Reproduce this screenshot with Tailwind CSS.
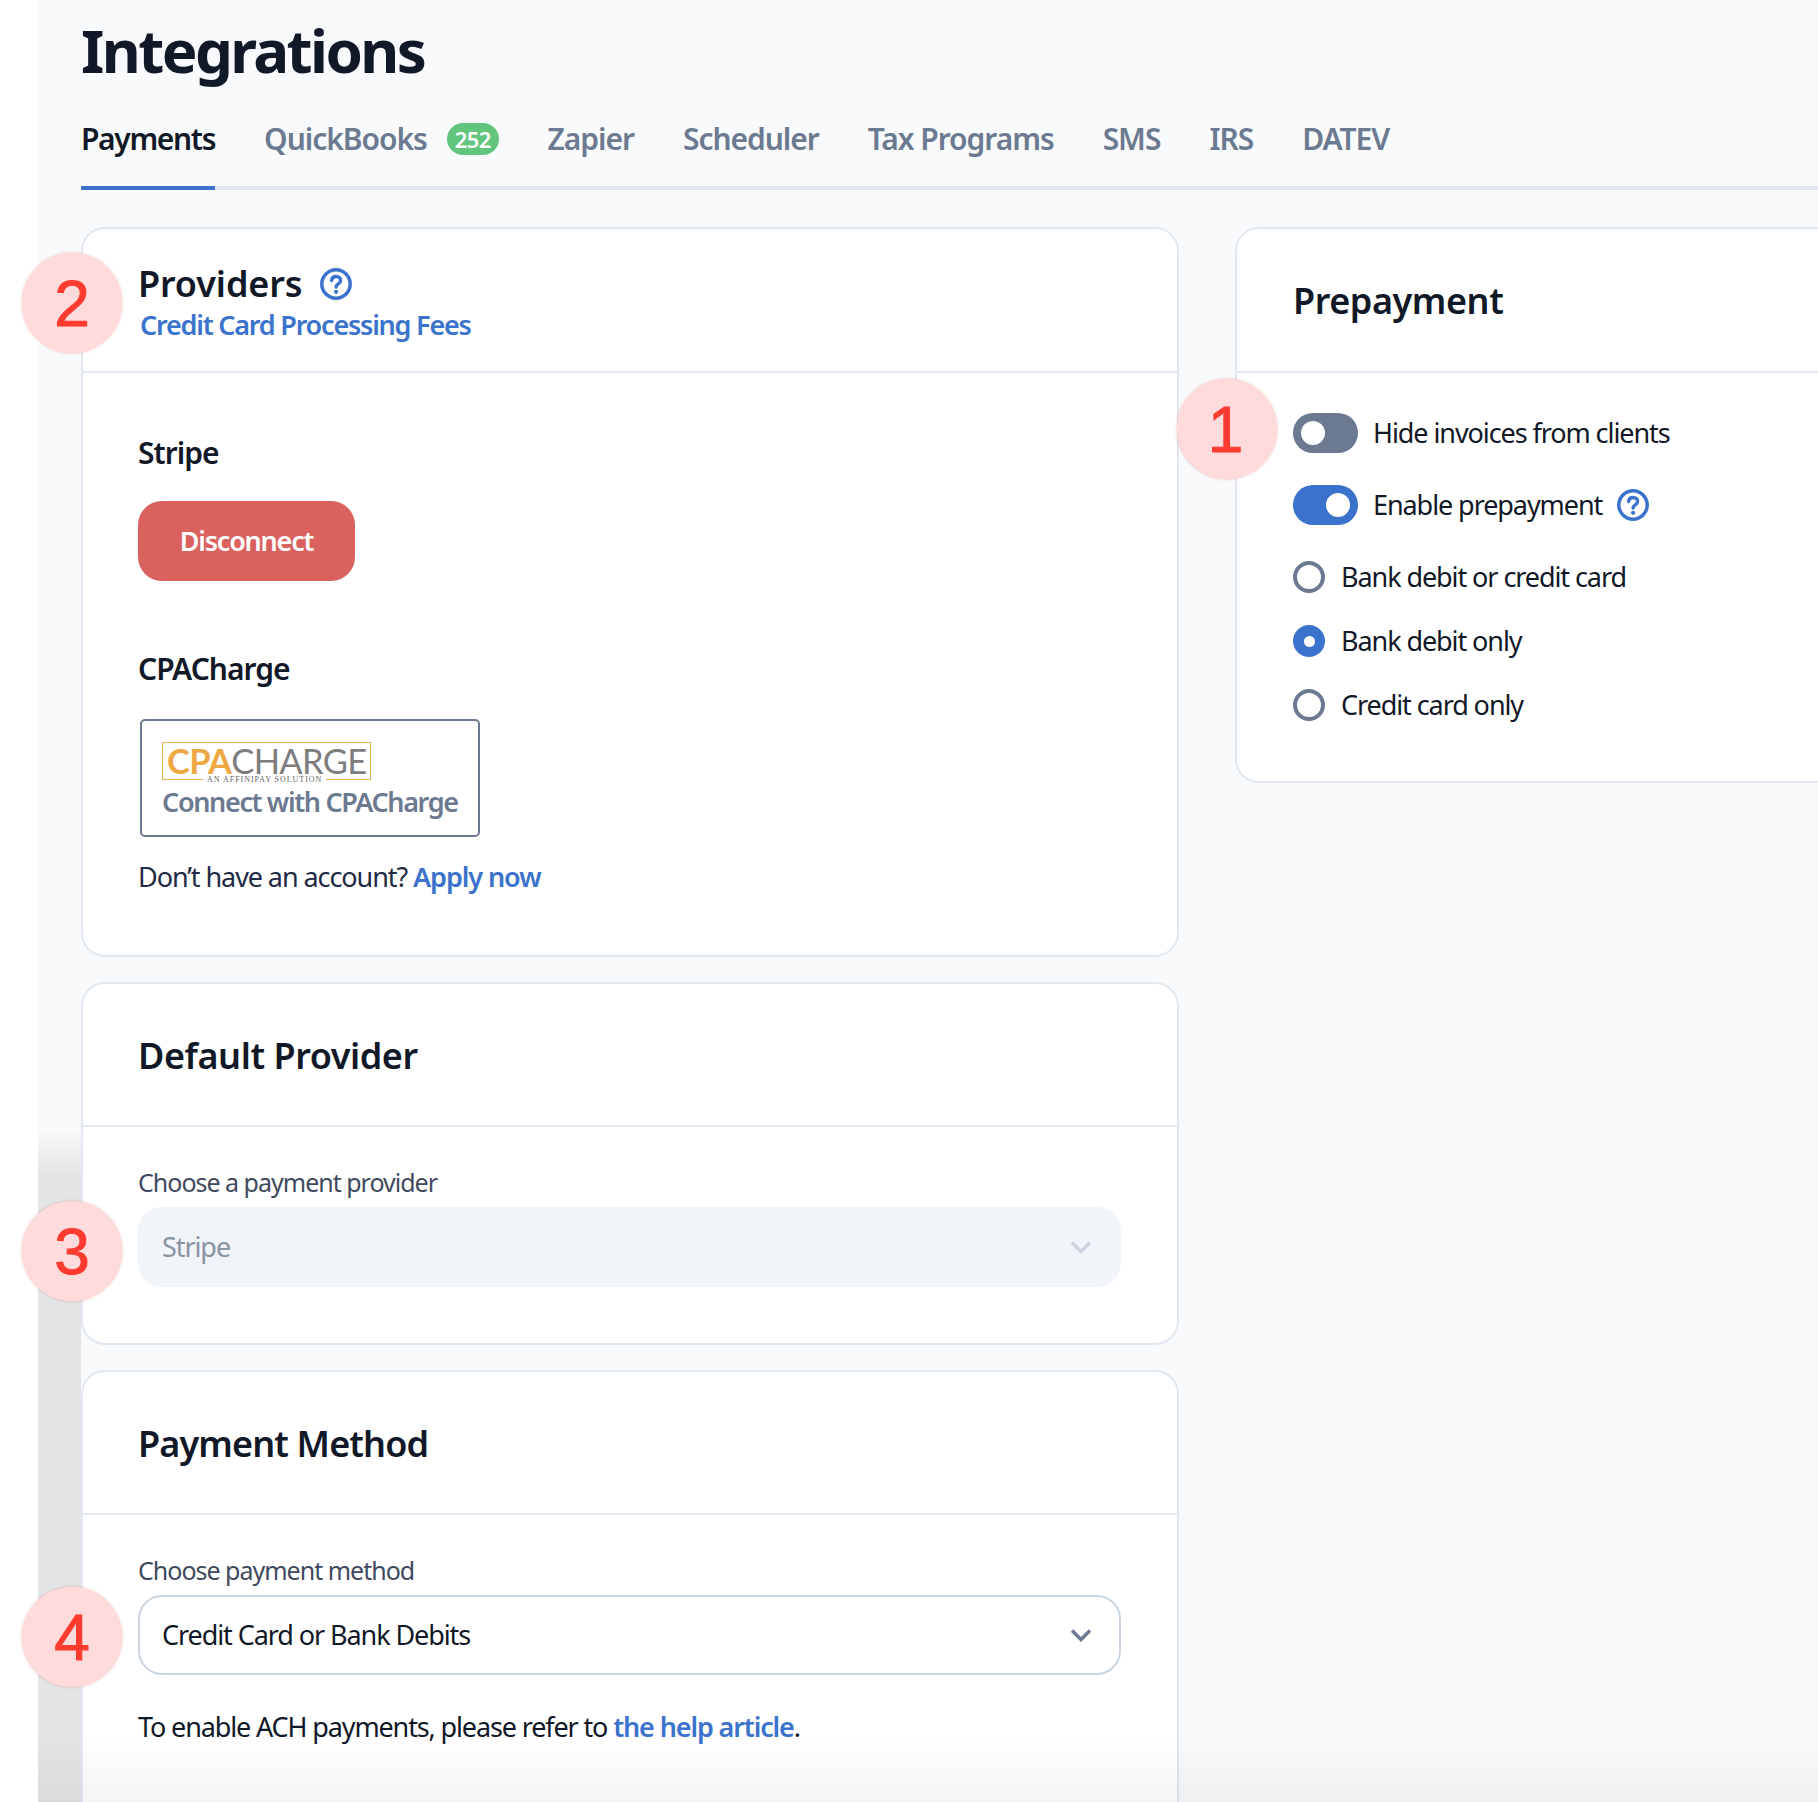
<!DOCTYPE html>
<html lang="en">
<head>
    <meta charset="UTF-8">
    <title>Integrations</title>
    <script src="https://cdn.jsdelivr.net/npm/@tailwindcss/browser@4"></script>
</head>
<body class="bg-white font-['Noto_Sans',sans-serif] text-[#111827]">
<div class="flex h-[1802px] w-[1818px] overflow-hidden relative">
    <!-- white strip on the left -->
    <div class="w-[38px] shrink-0 bg-white"></div>

    <main class="relative flex-1 bg-[#f9fafb] pl-[43px] overflow-hidden">
        <!-- grey strip beside the cards -->
        <div class="absolute left-0 top-[1130px] bottom-0 w-[43px] bg-gradient-to-b from-[#f9fafb] to-[#e3e4e6] to-[45px]"></div>

        <h1 class="h-[106px] pt-[14px] text-[60px] leading-[72px] font-bold tracking-[-0.043em] text-[#111827]">Integrations</h1>

        <!-- Tabs -->
        <nav class="flex gap-[49px] h-[84px] border-b-4 border-[#e2e8f0] text-[30px] font-semibold tracking-[-0.035em] text-[#6b7a90]">
            <a class="h-[84px] pt-[10px] border-b-4 border-[#3b73cc] text-[#111827] tracking-[-0.045em]">Payments</a>
            <a class="h-[84px] pt-[10px] flex items-start gap-[20px]">QuickBooks
                <span class="mt-[7px] h-[32px] px-[8px] rounded-full bg-[#62c57e] text-white text-[22px] leading-[32px] tracking-[-0.03em]">252</span>
            </a>
            <a class="h-[84px] pt-[10px]">Zapier</a>
            <a class="h-[84px] pt-[10px]">Scheduler</a>
            <a class="h-[84px] pt-[10px]">Tax Programs</a>
            <a class="h-[84px] pt-[10px]">SMS</a>
            <a class="h-[84px] pt-[10px]">IRS</a>
            <a class="h-[84px] pt-[10px]">DATEV</a>
        </nav>

        <div class="flex gap-[56px] mt-[37px]">
            <!-- Left column -->
            <div class="w-[1098px] shrink-0 flex flex-col gap-[25px]">
                <!-- Providers -->
                <section class="h-[730px] bg-white border-2 border-[#e2e8f0] rounded-[24px]">
                    <div class="h-[144px] border-b-2 border-[#e2e8f0] pl-[55px] pt-[30px]">
                        <div class="flex items-center gap-[18px] h-[50px]">
                            <h2 class="text-[36px] leading-[50px] font-semibold tracking-[-0.003em]">Providers</h2>
                            <svg class="w-[32px] h-[32px]" viewBox="0 0 32 32" fill="none" stroke="#3b73cc">
                                <circle cx="16" cy="16" r="14.2" stroke-width="3.5"/>
                                <path d="M11.5 12.5c.4-2.6 2.3-4 4.6-4 2.600 0 4.500 1.600 4.500 3.900 0 3.400-4.500 3.300-4.500 6.600" stroke-width="3.4" stroke-linecap="round"/>
                                <circle cx="16.100" cy="23.800" r="2.100" fill="#3b73cc" stroke="none"/>
                            </svg>
                        </div>
                        <a class="block -mt-[2px] ml-[2px] text-[27px] leading-[36px] font-semibold tracking-[-0.045em] text-[#3b73cc]">Credit Card Processing Fees</a>
                    </div>
                    <div class="pl-[55px] pt-[59px]">
                        <h3 class="text-[30px] leading-[42px] font-semibold tracking-[-0.033em]">Stripe</h3>
                        <button class="block mt-[27px] w-[217px] h-[80px] rounded-[24px] bg-[#d9625f] text-white text-[27px] font-semibold tracking-[-0.045em]">Disconnect</button>
                        <h3 class="mt-[67px] text-[30px] leading-[42px] font-semibold tracking-[-0.033em]">CPACharge</h3>
                        <button class="block mt-[29px] ml-[2px] w-[340px] h-[118px] border-2 border-[#6b7a90] rounded-[5px] pl-[20px] pt-[13px] text-left">
                            <span class="relative block -mt-[7px] w-[209px] h-[38px] border border-[#edb053] leading-[36px] pl-[4px] text-[34.5px] font-['Lato',sans-serif] tracking-[-0.02em] text-[#7d7d7d]"><span class="font-bold text-[#eea944]">CPA</span>CHARGE<span class="absolute left-[40px] top-[31px] h-[12px] px-[4px] bg-white font-['Liberation_Serif',serif] text-[8px] leading-[12px] tracking-[0.12em] text-[#666] whitespace-nowrap">AN AFFINIPAY SOLUTION</span></span>
                            <span class="block mt-[4px] text-[27px] leading-[36px] font-semibold tracking-[-0.05em] text-[#6b7a90] whitespace-nowrap">Connect with CPACharge</span>
                        </button>
                        <p class="mt-[20px] text-[27px] leading-[40px] tracking-[-0.04em] text-[#1f2a44]">Don’t have an account? <a class="font-semibold text-[#3b73cc]">Apply now</a></p>
                    </div>
                </section>

                <!-- Default Provider -->
                <section class="h-[363px] bg-white border-2 border-[#e2e8f0] rounded-[24px]">
                    <div class="h-[143px] border-b-2 border-[#e2e8f0] pl-[55px] pt-[2px] flex items-center">
                        <h2 class="text-[36px] leading-[50px] font-semibold tracking-[-0.012em]">Default Provider</h2>
                    </div>
                    <div class="pl-[55px] pt-[35px]">
                        <label class="block text-[25px] leading-[40px] tracking-[-0.04em] text-[#3f4a5e]">Choose a payment provider</label>
                        <div class="mt-[5px] w-[983px] h-[80px] rounded-[24px] bg-[#f1f4f9] pl-[24px] pr-[28px] flex items-center justify-between text-[27px] tracking-[-0.04em] text-[#8a93a3]">
                            Stripe
                            <svg class="w-[24px] h-[24px]" viewBox="0 0 24 24" fill="none" stroke="#cbd5e1" stroke-width="3.500"><path d="M3 7.500l9 9 9-9"/></svg>
                        </div>
                    </div>
                </section>

                <!-- Payment Method -->
                <section class="h-[480px] bg-white border-2 border-[#e2e8f0] rounded-[24px]">
                    <div class="h-[143px] border-b-2 border-[#e2e8f0] pl-[55px] pt-[2px] flex items-center">
                        <h2 class="text-[36px] leading-[50px] font-semibold tracking-[-0.024em]">Payment Method</h2>
                    </div>
                    <div class="pl-[55px] pt-[35px]">
                        <label class="block text-[25px] leading-[40px] tracking-[-0.04em] text-[#3f4a5e]">Choose payment method</label>
                        <div class="mt-[5px] w-[983px] h-[80px] rounded-[24px] bg-white border-2 border-[#cbd5e1] pl-[22px] pr-[26px] flex items-center justify-between text-[27px] tracking-[-0.04em] text-[#111827]">
                            Credit Card or Bank Debits
                            <svg class="w-[24px] h-[24px]" viewBox="0 0 24 24" fill="none" stroke="#6b7a90" stroke-width="3.500"><path d="M3 7.500l9 9 9-9"/></svg>
                        </div>
                        <p class="mt-[32px] text-[27px] leading-[40px] tracking-[-0.042em] text-[#111827]">To enable ACH payments, please refer to <a class="font-semibold text-[#3b73cc]">the help article</a>.</p>
                    </div>
                </section>
            </div>

            <!-- Right column -->
            <section class="w-[700px] shrink-0 h-[556px] bg-white border-2 border-[#e2e8f0] rounded-[24px]">
                <div class="h-[144px] border-b-2 border-[#e2e8f0] pl-[56px] pt-[2px] flex items-center">
                    <h2 class="text-[36px] leading-[50px] font-semibold tracking-[-0.012em]">Prepayment</h2>
                </div>
                <div class="pl-[56px] pt-[40px] text-[27px] tracking-[-0.04em]">
                    <div class="flex items-center gap-[15px] h-[40px]">
                        <span class="w-[65px] h-[40px] rounded-full bg-[#6b7a90] flex items-center pl-[8px]"><span class="w-[24px] h-[24px] rounded-full bg-white"></span></span>
                        Hide invoices from clients
                    </div>
                    <div class="flex items-center gap-[15px] h-[40px] mt-[32px]">
                        <span class="w-[65px] h-[40px] rounded-full bg-[#3b73cc] flex items-center justify-end pr-[8px]"><span class="w-[24px] h-[24px] rounded-full bg-white"></span></span>
                        Enable prepayment
                        <svg class="w-[32px] h-[32px]" viewBox="0 0 32 32" fill="none" stroke="#3b73cc">
                            <circle cx="16" cy="16" r="14.2" stroke-width="3.5"/>
                            <path d="M11.5 12.5c.4-2.6 2.3-4 4.6-4 2.600 0 4.500 1.600 4.500 3.900 0 3.400-4.500 3.300-4.500 6.600" stroke-width="3.4" stroke-linecap="round"/>
                            <circle cx="16.100" cy="23.800" r="2.100" fill="#3b73cc" stroke="none"/>
                        </svg>
                    </div>
                    <div class="flex items-center gap-[16px] h-[32px] mt-[36px]">
                        <span class="w-[32px] h-[32px] rounded-full bg-white border-[4px] border-[#6b7a90]"></span>
                        Bank debit or credit card
                    </div>
                    <div class="flex items-center gap-[16px] h-[32px] mt-[32px]">
                        <span class="w-[32px] h-[32px] rounded-full bg-[#3b73cc] flex items-center justify-center"><span class="w-[11px] h-[11px] rounded-full bg-white"></span></span>
                        Bank debit only
                    </div>
                    <div class="flex items-center gap-[16px] h-[32px] mt-[32px]">
                        <span class="w-[32px] h-[32px] rounded-full bg-white border-[4px] border-[#6b7a90]"></span>
                        Credit card only
                    </div>
                </div>
            </section>
        </div>

        <!-- fade along the bottom -->
        <div class="absolute left-0 right-0 bottom-0 h-[70px] bg-gradient-to-b from-transparent to-black/[0.04]"></div>
    </main>

    <!-- Annotation markers -->
    <div class="absolute left-[22px] top-[253px] w-[100px] h-[100px] pt-[2px] rounded-full bg-[#ffdcdb] shadow-[0_0_3px_rgba(220,120,120,0.5)] flex items-center justify-center font-['Liberation_Sans',sans-serif] text-[64px] [-webkit-text-stroke:1px_#ff3b30] text-[#ff3b30]">2</div>
    <div class="absolute left-[1177px] top-[379px] w-[100px] h-[100px] pt-[2px] pr-[3px] rounded-full bg-[#ffdcdb] shadow-[0_0_3px_rgba(220,120,120,0.5)] flex items-center justify-center font-['Liberation_Sans',sans-serif] text-[64px] [-webkit-text-stroke:1px_#ff3b30] text-[#ff3b30]">1</div>
    <div class="absolute left-[22px] top-[1201px] w-[100px] h-[100px] pt-[2px] rounded-full bg-[#ffdcdb] shadow-[0_0_3px_rgba(220,120,120,0.5)] flex items-center justify-center font-['Liberation_Sans',sans-serif] text-[64px] [-webkit-text-stroke:1px_#ff3b30] text-[#ff3b30]">3</div>
    <div class="absolute left-[22px] top-[1587px] w-[100px] h-[100px] pt-[2px] rounded-full bg-[#ffdcdb] shadow-[0_0_3px_rgba(220,120,120,0.5)] flex items-center justify-center font-['Liberation_Sans',sans-serif] text-[64px] [-webkit-text-stroke:1px_#ff3b30] text-[#ff3b30]">4</div>
</div>
</body>
</html>
